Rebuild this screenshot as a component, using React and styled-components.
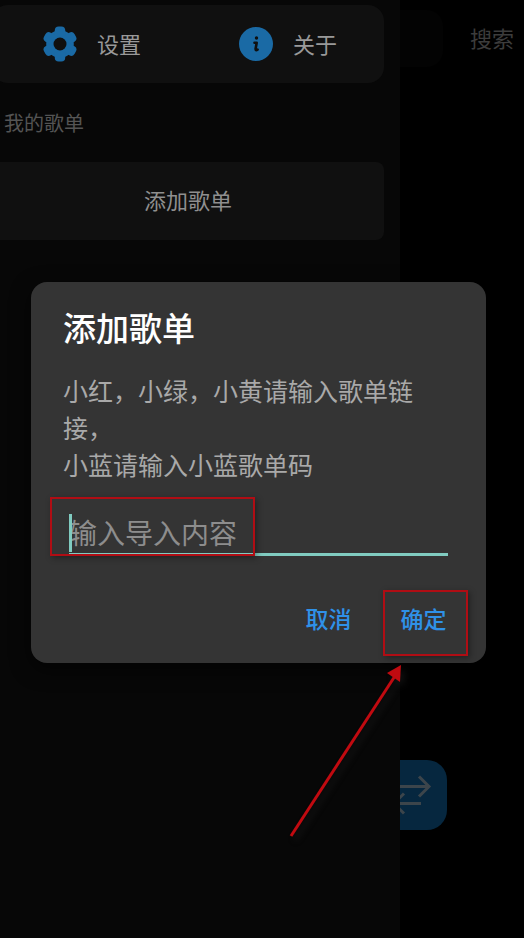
import React from "react";
import styled, { createGlobalStyle } from "styled-components";

const GlobalStyle = createGlobalStyle`
  *, *::before, *::after { box-sizing: border-box; }
  body {
    margin: 0;
    background: #000;
    font-family: "Noto Sans CJK SC", sans-serif;
  }
  button, input { font-family: inherit; }
  h1, h2, p { margin: 0; }
`;

const Screen = styled.div`
  position: relative;
  display: grid;
  grid-template-columns: minmax(0, 1fr) 124px;
  min-height: 100vh;
  overflow: hidden;
`;

const Drawer = styled.aside`
  display: flex;
  flex-direction: column;
  padding: 5px 16px 0 0;
  background: #070707;
`;

const MenuCard = styled.nav`
  display: grid;
  grid-template-columns: 1fr 1fr;
  height: 78px;
  margin-left: -8px;
  border-radius: 16px;
  background: #101010;
`;

const MenuItem = styled.button`
  display: flex;
  align-items: center;
  gap: 20px;
  padding: 0 0 0 51px;
  border: 0;
  background: none;
  color: #999;
  font-size: 22px;
  line-height: 32px;
`;

const MenuText = styled.span`
  padding-bottom: 2px;
`;

const SectionLabel = styled.h2`
  margin: 25px 0 24px 4px;
  color: #545454;
  font-size: 20px;
  font-weight: 400;
  line-height: 30px;
`;

const AddButton = styled.button`
  height: 78px;
  margin-left: -8px;
  padding: 0 0 4px;
  border: 0;
  border-radius: 8px;
  background: #101010;
  color: #8f8f8f;
  font-size: 22px;
`;

const Home = styled.main`
  display: flex;
  flex-direction: column;
  justify-content: space-between;
  padding: 10px 10px 108px 0;
  overflow: hidden;
  background: #000;
`;

const SearchRow = styled.div`
  display: flex;
  align-items: center;
  justify-content: space-between;
`;

const SearchField = styled.input`
  width: 43px;
  height: 57px;
  border: 0;
  border-radius: 0 16px 16px 0;
  background: #030303;
`;

const SearchButton = styled.button`
  padding: 0 0 4px;
  border: 0;
  background: none;
  color: #3c3c3c;
  font-size: 22px;
`;

const SwapButton = styled.button`
  display: flex;
  align-items: center;
  justify-content: center;
  width: 70px;
  height: 70px;
  margin-left: -23px;
  padding: 0;
  border: 0;
  border-radius: 20px;
  background: #06273f;
`;

const Scrim = styled.div`
  position: absolute;
  inset: 0;
  display: flex;
  align-items: center;
  padding: 7px 38px 0 31px;
`;

const Dialog = styled.section`
  position: relative;
  flex: 1;
  padding: 25px 18px 7px 32px;
  border-radius: 16px;
  background: #343434;
  box-shadow: 0 6px 20px rgba(0, 0, 0, 0.6);
`;

const Title = styled.h1`
  color: #fff;
  font-size: 33px;
  font-weight: 500;
  line-height: 40px;
`;

const Message = styled.p`
  margin: 25px 14px 31px 0;
  color: #a9a9a9;
  font-size: 25px;
  line-height: 37px;
`;

const Field = styled.div`
  position: relative;
  margin: 0 20px 34px 6px;
`;

const TextInput = styled.input`
  display: block;
  width: 100%;
  height: 42px;
  padding: 0 0 3px;
  border: 0;
  border-bottom: 3px solid #80cbc0;
  border-radius: 0;
  outline: 0;
  background: none;
  color: #fff;
  font-size: 28px;
  line-height: 36px;
  &::placeholder { color: #8d8d8d; opacity: 1; }
`;

const Caret = styled.span`
  position: absolute;
  top: 0;
  left: 0;
  width: 3px;
  height: 38px;
  background: #80cbc0;
`;

const Actions = styled.div`
  display: flex;
  justify-content: flex-end;
  gap: 10px;
`;

const ActionSlot = styled.div`
  position: relative;
`;

const Action = styled.button`
  width: 85px;
  height: 66px;
  padding: 0 4px 10px 0;
  border: 0;
  background: none;
  color: #2f91e8;
  font-size: 23px;
  font-weight: 500;
`;

const Highlight = styled.span`
  position: absolute;
  border: 2px solid #b00d14;
  box-shadow: 2px 2px 6px rgba(0, 0, 0, 0.35);
  pointer-events: none;
`;

const FieldHighlight = styled(Highlight)`
  top: -17px;
  left: -19px;
  width: 205px;
  height: 59px;
`;

const ActionHighlight = styled(Highlight)`
  inset: 0;
`;

const Pointer = styled.svg`
  position: absolute;
  top: 100%;
  right: 80px;
  width: 120px;
  height: 180px;
  pointer-events: none;
  filter: drop-shadow(4px 4px 3px rgba(50, 50, 50, 0.3));
`;

function GearIcon() {
  return (
    <svg width="34" height="36" viewBox="-17 -18 34 36" aria-hidden="true">
      <g fill="#1a6aa5">
        <circle r="13.800" />
        <rect x="-5.200" y="-17.500" width="10.400" height="35" rx="3.800" />
        <rect x="-5.200" y="-17.500" width="10.400" height="35" rx="3.800" transform="rotate(60)" />
        <rect x="-5.200" y="-17.500" width="10.400" height="35" rx="3.800" transform="rotate(120)" />
      </g>
      <circle r="6.500" fill="#101010" />
    </svg>
  );
}

function InfoIcon() {
  return (
    <svg width="34" height="36" viewBox="0 0 34 36" aria-hidden="true">
      <circle cx="17" cy="18" r="17" fill="#1a6aa5" />
      <circle cx="17.500" cy="12" r="1.700" fill="#101010" />
      <path
        d="M15.500 16.800H17.700L16.600 22.800Q16.500 24.800 18.600 23.700"
        fill="none"
        stroke="#101010"
        strokeWidth="2.600"
        strokeLinecap="round"
        strokeLinejoin="round"
      />
    </svg>
  );
}

function SwapIcon() {
  return (
    <svg width="70" height="70" viewBox="0 0 70 70" fill="none" stroke="#3c454b" strokeWidth="3" aria-hidden="true">
      <path d="M18 26.500H52M42 16.500L52 26.500L42 36.500M44 43.500H18M27 33.500L17 43.500L27 53.500" />
    </svg>
  );
}

export default function App() {
  return (
    <>
      <GlobalStyle />
      <Screen>
        <Drawer>
          <MenuCard>
            <MenuItem type="button"><GearIcon /><MenuText>设置</MenuText></MenuItem>
            <MenuItem type="button"><InfoIcon /><MenuText>关于</MenuText></MenuItem>
          </MenuCard>
          <SectionLabel>我的歌单</SectionLabel>
          <AddButton type="button">添加歌单</AddButton>
        </Drawer>
        <Home>
          <SearchRow>
            <SearchField type="search" aria-label="搜索" />
            <SearchButton type="button">搜索</SearchButton>
          </SearchRow>
          <SwapButton type="button" aria-label="切换"><SwapIcon /></SwapButton>
        </Home>
        <Scrim>
          <Dialog role="dialog" aria-labelledby="dialog-title">
            <Title id="dialog-title">添加歌单</Title>
            <Message>
              小红，小绿，小黄请输入歌单链接，
              <br />
              小蓝请输入小蓝歌单码
            </Message>
            <Field>
              <TextInput type="text" placeholder="输入导入内容" aria-label="输入导入内容" />
              <Caret />
              <FieldHighlight />
            </Field>
            <Actions>
              <Action type="button">取消</Action>
              <ActionSlot>
                <Action type="button">确定</Action>
                <ActionHighlight />
              </ActionSlot>
            </Actions>
            <Pointer viewBox="0 0 120 180" aria-hidden="true">
              <path d="M5 173L109 13" stroke="#c00a10" strokeWidth="3" />
              <path d="M115 2L101 10L114 19Z" fill="#c00a10" />
            </Pointer>
          </Dialog>
        </Scrim>
      </Screen>
    </>
  );
}
